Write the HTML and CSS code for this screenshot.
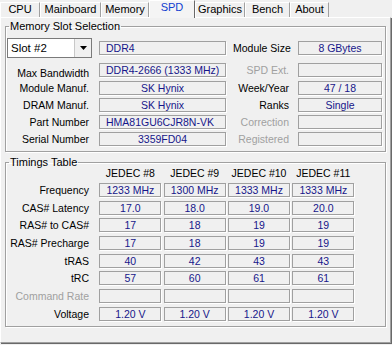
FILE: index.html
```html
<!DOCTYPE html>
<html lang="en">
<head>
<meta charset="UTF-8">
<title>CPU-Z SPD</title>
<link rel="stylesheet" href="styles.css">
</head>
<body>

<div class="window">
    <div class="tabs">
        <div class="tab w-cpu">CPU</div>
        <div class="tab w-mainboard">Mainboard</div>
        <div class="tab w-memory">Memory</div>
        <div class="tab w-spd active">SPD</div>
        <div class="tab w-graphics">Graphics</div>
        <div class="tab w-bench">Bench</div>
        <div class="tab w-about">About</div>
    </div>

    <div class="panel">
        <fieldset class="group slot-group">
            <legend>Memory Slot Selection</legend>
            <div class="slot-grid">
                <div class="combo">
                    <span class="combo-text">Slot #2</span>
                    <span class="combo-btn">
                        <svg width="7" height="4" viewBox="0 0 7 4"><path d="M0 0h7L3.5 4z" fill="#000"/></svg>
                    </span>
                </div>
                <div class="field left top-row">DDR4</div>
                <div class="label">Module Size</div>
                <div class="field top-row">8 GBytes</div>

                <div class="label">Max Bandwidth</div>
                <div class="field left">DDR4-2666 (1333 MHz)</div>
                <div class="label off">SPD Ext.</div>
                <div class="field"></div>

                <div class="label">Module Manuf.</div>
                <div class="field">SK Hynix</div>
                <div class="label">Week/Year</div>
                <div class="field">47 / 18</div>

                <div class="label">DRAM Manuf.</div>
                <div class="field">SK Hynix</div>
                <div class="label">Ranks</div>
                <div class="field">Single</div>

                <div class="label">Part Number</div>
                <div class="field left">HMA81GU6CJR8N-VK</div>
                <div class="label off">Correction</div>
                <div class="field"></div>

                <div class="label">Serial Number</div>
                <div class="field">3359FD04</div>
                <div class="label off">Registered</div>
                <div class="field"></div>
            </div>
        </fieldset>

        <fieldset class="group timing-group">
            <legend>Timings Table</legend>
            <div class="timing-grid">
                <div></div>
                <div class="head">JEDEC #8</div>
                <div class="head">JEDEC #9</div>
                <div class="head">JEDEC #10</div>
                <div class="head">JEDEC #11</div>

                <div class="label">Frequency</div>
                <div class="field">1233 MHz</div>
                <div class="field">1300 MHz</div>
                <div class="field">1333 MHz</div>
                <div class="field">1333 MHz</div>

                <div class="label">CAS# Latency</div>
                <div class="field">17.0</div>
                <div class="field">18.0</div>
                <div class="field">19.0</div>
                <div class="field">20.0</div>

                <div class="label">RAS# to CAS#</div>
                <div class="field">17</div>
                <div class="field">18</div>
                <div class="field">19</div>
                <div class="field">19</div>

                <div class="label">RAS# Precharge</div>
                <div class="field">17</div>
                <div class="field">18</div>
                <div class="field">19</div>
                <div class="field">19</div>

                <div class="label">tRAS</div>
                <div class="field">40</div>
                <div class="field">42</div>
                <div class="field">43</div>
                <div class="field">43</div>

                <div class="label">tRC</div>
                <div class="field">57</div>
                <div class="field">60</div>
                <div class="field">61</div>
                <div class="field">61</div>

                <div class="label off">Command Rate</div>
                <div class="field"></div>
                <div class="field"></div>
                <div class="field"></div>
                <div class="field"></div>

                <div class="label">Voltage</div>
                <div class="field">1.20 V</div>
                <div class="field">1.20 V</div>
                <div class="field">1.20 V</div>
                <div class="field">1.20 V</div>
            </div>
        </fieldset>
    </div>
</div>

</body>
</html>
```

FILE: styles.css
```css
/* Base */
* {
    box-sizing: border-box;
}
body {
    margin: 0;
    background: #f0f0f0;
    font-family: 'Liberation Sans', Arial, sans-serif;
    font-size: 10.5px;
    color: #000;
}
.window {
    width: 392px;
    height: 345px;
    overflow: hidden;
}

/* Tab strip */
.tabs {
    display: flex;
    height: 17px;
    align-items: flex-end;
    font-size: 11px;
}
.tab {
    height: 15px;
    line-height: 13px;
    text-align: center;
    background: #f0f0f0;
    border-left: 1px solid #fff;
    border-right: 1px solid #a0a0a0;
    border-top: 1px solid #fff;
}
.tab.active {
    position: relative;
    z-index: 1;
    height: 18px;
    margin-bottom: -1px;
    color: #1040d0;
    background: #f4f4f4;
    border-right-color: #696969;
}
.w-cpu { width: 40px; }
.w-mainboard { width: 61px; }
.w-memory { width: 48px; }
.w-spd { width: 46px; }
.w-graphics { width: 50px; }
.w-bench { width: 45px; }
.w-about { width: 39px; }

/* Page panel */
.panel {
    width: 391px;
    height: 326px;
    border-top: 1px solid #fff;
    border-left: 1px solid #fff;
    border-right: 1px solid #a0a0a0;
    border-bottom: 1px solid #a0a0a0;
    box-shadow: 1px 1px 0 #696969;
    padding: 2px 0 0 4px;
}

/* Group boxes */
.group {
    width: 381px;
    margin: 0;
    border: 1px solid #a0a0a0;
    box-shadow: 1px 1px 0 #fff, inset 1px 1px 0 #fff;
}
.group legend {
    padding: 0 1px;
    margin-left: 3px;
    line-height: 12px;
    font-size: 11px;
}
.slot-group {
    padding: 6px 0 5px 0;
}
.timing-group {
    margin-top: 4px;
    padding: 0 0 5px 0;
}

/* Label / value cells */
.label {
    text-align: right;
    padding-right: 3px;
    line-height: 14px;
    white-space: nowrap;
}
.label.off {
    color: #a0a0a0;
}
.field {
    height: 14px;
    line-height: 12px;
    text-align: center;
    color: #16168a;
    border: 1px solid #a0a0a0;
    box-shadow: 1px 1px 0 #fff;
    white-space: nowrap;
    overflow: hidden;
}
.field.left {
    text-align: left;
    padding-left: 6px;
}

/* Memory slot section */
.slot-grid {
    display: grid;
    grid-template-columns: 86px 127px 58px 84px;
    grid-template-rows: 22px repeat(5, 14px);
    column-gap: 7px;
    row-gap: 3.25px;
}
.slot-grid .top-row {
    margin-top: 3px;
}
.slot-grid .label:nth-child(4n+3) {
    padding-right: 2px;
}
.slot-grid .top-row + .label {
    line-height: 20px;
}
.combo {
    margin-left: 1px;
    height: 20px;
    display: flex;
    background: #fff;
    border: 1px solid #7a7a7a;
}
.combo-text {
    flex: 1;
    padding-left: 3px;
    line-height: 18px;
    font-size: 11.5px;
}
.combo-btn {
    width: 17px;
    display: flex;
    align-items: center;
    justify-content: center;
    background: #f0f0f0;
    border-left: 1px solid #c8c8c8;
}

/* Timings section */
.timing-grid {
    display: grid;
    grid-template-columns: 91px repeat(4, 62px);
    grid-template-rows: 11px repeat(8, 14px);
    column-gap: 2.33px;
    row-gap: 3.7px;
}
.timing-grid .label {
    padding-right: 8px;
}
.timing-grid .head {
    text-align: center;
    line-height: 11px;
}
```
